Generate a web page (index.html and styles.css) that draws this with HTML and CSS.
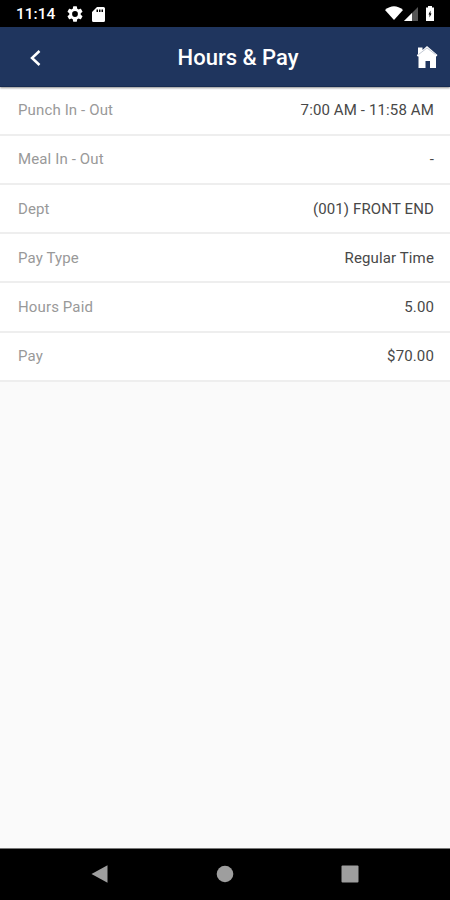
FILE: index.html
```html
<!DOCTYPE html>
<html lang="en">
<head>
<meta charset="utf-8">
<title>Hours &amp; Pay</title>
<link rel="stylesheet" href="styles.css">
</head>
<body>
<div class="status">
  <span class="clock">11:14</span>
  <svg class="gear" width="16" height="16" viewBox="2 2 20 20"><path fill="#fff" d="M19.14 12.94c.04-.3.06-.61.06-.94s-.02-.64-.07-.94l2.03-1.58a.49.49 0 0 0 .12-.61l-1.92-3.32a.49.49 0 0 0-.59-.22l-2.39.96a7 7 0 0 0-1.62-.94l-.36-2.54a.48.48 0 0 0-.48-.41h-3.84a.47.47 0 0 0-.47.41l-.36 2.54c-.59.24-1.13.57-1.62.94l-2.39-.96a.48.48 0 0 0-.59.22L2.74 8.87a.47.47 0 0 0 .12.61l2.03 1.58a6 6 0 0 0-.02 1.88l-2.03 1.58a.49.49 0 0 0-.12.61l1.92 3.32c.12.22.37.29.59.22l2.39-.96c.5.38 1.03.7 1.62.94l.36 2.54c.05.24.24.41.48.41h3.84c.24 0 .44-.17.47-.41l.36-2.54a6.8 6.8 0 0 0 1.62-.94l2.39.96c.22.08.47 0 .59-.22l1.92-3.32a.47.47 0 0 0-.12-.61zM12 15.6a3.6 3.6 0 1 1 0-7.2 3.6 3.6 0 0 1 0 7.2z"/></svg>
  <svg class="card" width="13" height="15" viewBox="0 0 13 15"><path fill="#fff" fill-rule="evenodd" d="M5 0h6.5Q13 0 13 1.500v12Q13 15 11.500 15h-10Q0 15 0 13.500V5zM4.500 2.500v2.500H6v-2.500zM7 2.500v2.500h1.500v-2.500zM9.500 2.500v2.500H11v-2.500z"/></svg>
  <svg class="signals" width="51" height="16" viewBox="0 0 51 16"><path fill="#fff" d="M0 4Q9-3.500 18 4L9 14z"/><path fill="#555" d="M33 1v14H19z"/><path fill="#fff" d="M27 7v8h-8z"/><path fill="#fff" fill-rule="evenodd" d="M43 0h4v1.500h2V15h-8V1.500h2zM45.500 4.500l-2 4H44.500v3l2-4h-1z"/></svg>
</div>
<header class="bar">
  <svg class="back" width="12" height="18" viewBox="0 0 12 18"><path d="M10.500 2 3 9l7.500 7" fill="none" stroke="#fff" stroke-width="2.500"/></svg>
  <h1 class="title">Hours &amp; Pay</h1>
  <svg class="home" width="22" height="22" viewBox="0 0 22 22"><path fill="#fff" d="M2 1.500h4.500V4L11 0l10.500 9-1 1.500-.5-.3V22h-6v-7h-4.500v7H2.500V10.200l-.5.5L.8 9.300 2 8z"/><path d="m2.500 8.500 8.500-6.500 8.500 6.500" fill="none" stroke="#1f355e" stroke-opacity=".35" stroke-width=".8"/></svg>
</header>
<main class="content">
  <dl class="list">
    <div class="row"><dt>Punch In - Out</dt><dd>7:00 AM - 11:58 AM</dd></div>
    <div class="row"><dt>Meal In - Out</dt><dd>-</dd></div>
    <div class="row"><dt>Dept</dt><dd>(001) FRONT END</dd></div>
    <div class="row"><dt>Pay Type</dt><dd>Regular Time</dd></div>
    <div class="row"><dt>Hours Paid</dt><dd>5.00</dd></div>
    <div class="row"><dt>Pay</dt><dd>$70.00</dd></div>
  </dl>
</main>
<nav class="nav">
  <svg width="18" height="18" viewBox="0 0 18 18"><path fill="#9e9e9e" d="M.5 9 16.500.3v17.400z"/></svg>
  <svg width="18" height="18" viewBox="0 0 18 18"><circle cx="9" cy="9" r="8.300" fill="#9e9e9e"/></svg>
  <svg width="18" height="18" viewBox="0 0 18 18"><rect x=".5" y=".5" width="17" height="17" rx="1" fill="#9e9e9e"/></svg>
</nav>
</body>
</html>
```
FILE: styles.css
```css
* { box-sizing: border-box; }
body {
  margin: 0;
  height: 900px;
  display: flex;
  flex-direction: column;
  overflow: hidden;
  background: #fafafa;
  font-family: Roboto, sans-serif;
}
.status {
  height: 27px;
  flex: none;
  display: flex;
  align-items: center;
  padding: 1px 14px 0 16px;
  background: #000;
  color: #fff;
}
.clock {
  width: 51px;
  font-size: 15.5px;
  font-weight: 500;
  letter-spacing: 0;
}
.card { margin-left: 9px; }
.signals { margin-left: auto; }
.bar {
  height: 60px;
  flex: none;
  display: grid;
  grid-template-columns: 60px 1fr 60px;
  align-items: center;
  background: #1f355e;
  border-bottom: 1px solid #172b50;
  box-shadow: 0 1px 2px rgba(0, 0, 0, 0.45);
  position: relative;
}
.back { margin: 2px 0 0 29px; }
.title {
  margin: 2px 0 0 26px;
  justify-self: center;
  color: #fff;
  font-size: 22px;
  font-weight: 500;
  letter-spacing: 0;
  white-space: nowrap;
}
.home { justify-self: end; margin: 1px 12px 0 0; }
.content { flex: 1; }
.list { margin: 0; }
.row {
  height: 49.2px;
  display: flex;
  align-items: center;
  justify-content: space-between;
  padding: 0 16px 0 18px;
  background: #fff;
  border-bottom: 2px solid #eeeeee;
  font-size: 15px;
  letter-spacing: 0.13px;
}
.row:first-child { height: 48.8px; padding-top: 0; }
dt { color: #999; }
dd { margin: 0; color: #484848; }
.nav {
  height: 52px;
  flex: none;
  display: flex;
  align-items: center;
  justify-content: space-between;
  padding: 0 91px 2px;
  border-top: 1px solid #777;
  background: #000;
}
```
